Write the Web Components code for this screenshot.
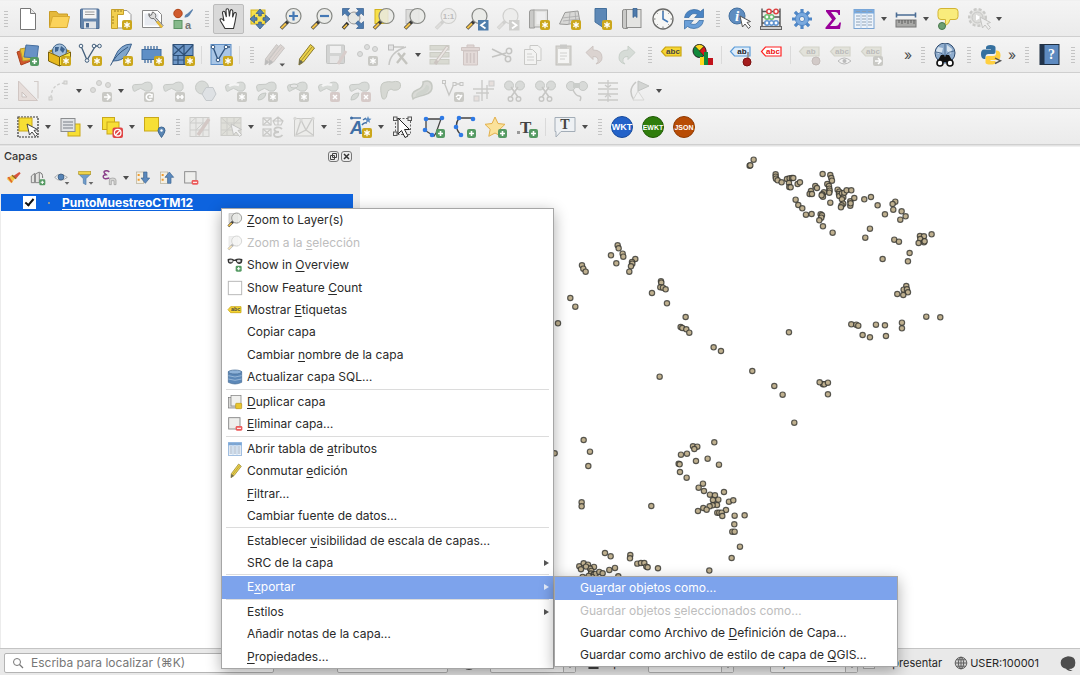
<!DOCTYPE html>
<html lang="es">
<head>
<meta charset="utf-8">
<title>QGIS</title>
<style>
html,body{margin:0;height:100%}
body{font:12px/16px Inter,"Liberation Sans",sans-serif;color:#262626;background:#ececec;overflow:hidden}
</style>
</head>
<body>
<gis-window></gis-window>
<script>
/* ---------- icon fragments ---------- */
const Y='#cba71c', G='#c9c9c5';
const star=(x=13,y=13,c=Y)=>`<g transform="translate(${x} ${y})"><rect width="10" height="10" rx="2" fill="${c}"/><path d="M5 1.800v6.400M2.300 3.400l5.400 3.200M2.300 6.600l5.400-3.200" stroke="#fff" stroke-width="1.300"/></g>`;
const plus=(x=14,y=14,c='#559a63')=>`<g transform="translate(${x} ${y})"><rect width="9" height="9" rx="2" fill="${c}"/><path d="M4.500 2v5M2 4.500h5" stroke="#fff" stroke-width="1.600"/></g>`;
const square=(inner,c=G)=>`<g transform="translate(13 13)"><rect width="10" height="10" rx="2" fill="${c}"/><path d="${inner}" stroke="#fff" stroke-width="1.500" fill="none"/></g>`;
const mag=(inner='',off=false)=>{const o=off;return `<path d="M9 14.500L2 21.500" stroke="${o?'#d0d0ce':'#3a3a3a'}" stroke-width="3.600"/><path d="M7 16.500L2.300 21.200" stroke="${o?'#dedddb':'#f0c14b'}" stroke-width="2.200"/><circle cx="14.500" cy="9" r="7.500" fill="${o?'#ececeb':'#e9eae6'}" fill-opacity=".85" stroke="${o?'#cfcfcd':'#868884'}" stroke-width="1.200"/>${inner}`};
const cursor=(x,y,f='#fff',s='#555')=>`<path transform="translate(${x} ${y})" d="M0 0l2.500 11 2.500-3 3.500 4.500 2-1.800-3.500-4.200 3.500-1z" fill="${f}" stroke="${s}" stroke-width="1"/>`;
const blob=(x=1,y=2)=>`<path transform="translate(${x} ${y})" d="M1 8Q-1 3 5 3.500T13 1.500Q19 0 20 4t-2 6q-5 1-7-1.500T5 9t-4-1z" fill="#d8dbd8" stroke="#c6c9c6"/>`;
const tag=(t,f,s,c,x=1,y=3)=>`<path transform="translate(${x} ${y})" d="M4.500 1h15.500v9H4.500L.5 5.500z" fill="${f}" stroke="${s}" stroke-width="1.200"/><text x="${x+12}" y="${y+8}" text-anchor="middle" font-family="Liberation Sans" font-size="8" font-weight="700" fill="${c}">${t}</text>`;
const pencil=(a,b,tip)=>`<path d="M17.500 1.500l4 3.500-11 14-4.500 3 .5-6z" fill="${a}" stroke="${b}" stroke-width="1"/><path d="M19 4L8 18" stroke="${b}" stroke-width=".8"/><path d="M6.500 16.500l3.800 2.500-4.500 3z" fill="${tip}"/>`;
const node=(x,y,c='#2f7ae5')=>`<circle cx="${x}" cy="${y}" r="2.300" fill="${c}"/>`;
const badge=(t,c,d,fs)=>`<circle cx="12" cy="12" r="10.500" fill="${c}" stroke="${d}" stroke-width="1"/><text x="12" y="15" text-anchor="middle" font-family="Liberation Sans" font-weight="700" font-size="${fs}" fill="#fff">${t}</text>`;
const clip=`<circle cx="6" cy="6.500" r="4.500" fill="#d8dad8" stroke="#c6c9c6"/><circle cx="17" cy="6.500" r="4.500" fill="#d8dad8" stroke="#c6c9c6"/><path d="M8 8l7 10M15 8L8 18" stroke="#c6c6c4" stroke-width="1.500"/><circle cx="7.500" cy="20" r="2.300" fill="none" stroke="#c6c6c4" stroke-width="1.400"/><circle cx="15.500" cy="20" r="2.300" fill="none" stroke="#c6c6c4" stroke-width="1.400"/>`;

const ICONS={
 doc:`<path d="M4.500 1.500h10l5 5v16h-15z" fill="#fff" stroke="#777"/><path d="M14.500 1.500v5h5" fill="#e8e8e8" stroke="#777"/>`,
 open:`<path d="M2.500 20.500v-16h7l2 2.500h9v3" fill="#e5b93c" stroke="#c99c25"/><path d="M2.500 20.500l3-11h17l-2.500 11z" fill="#fbd35b" stroke="#d8aa31"/>`,
 save:`<path d="M3.500 2h16.500q1 0 1 1v18.500H3.500q-1 0-1-1V3q0-1 1-1z" fill="#6485ac" stroke="#4b6b93"/><rect x="5" y="2.500" width="13.500" height="9" fill="#f4f4f4"/><path d="M7 5h9.500M7 7.500h9.500" stroke="#999"/><rect x="6" y="14.500" width="12" height="7" fill="#dfe3e8"/><rect x="8" y="16" width="3" height="4.500" fill="#4b6b93"/>`,
 layout:`<path d="M5 3.500h13l4 4V21H5z" fill="#fff" stroke="#999"/><path d="M2.500 2.500h12v5h-6v14h-6z" fill="#f2cf50" stroke="#c5a02b"/><path d="M6 3v2M9 3v2M12 3v2M3 10h2M3 13h2M3 16h2" stroke="#8a6d15" stroke-width=".8"/>${star(13,13)}`,
 layouts:`<path d="M2.500 3.500h15l4 4v13h-19z" fill="#fff" stroke="#888"/><path d="M4.500 6.500h14v12h-14z" fill="#e7eaf0"/><path d="M9 6.500a4 4 0 0 0 5 5l7 9 2-2-7.500-8a4 4 0 0 0-3-5.500l-1 3-2 .5z" fill="#ddd" stroke="#666" stroke-width=".9"/><path d="M17 14.500l5 6" stroke="#e8bb35" stroke-width="2.400"/>`,
 style:`<circle cx="7" cy="6.500" r="4.200" fill="#d05a2d" stroke="#b14519"/><path d="M21.500 2l-5 4.500q-3 1-3 4 3 .5 5-2L22 3z" fill="#5c83ae"/><rect x="3" y="13.500" width="8" height="8" fill="#86b98b" stroke="#5c9463"/><text x="14" y="22" font-family="Liberation Sans" font-size="11" font-weight="700" fill="#777">a</text>`,
 pan:`<path d="M8 21.500L3.500 14q-1-2 .5-2.200T7 14L5.500 6q0-1.700 1.200-1.700T8.200 6l1.200 4L9 3.500Q9 1.800 10.300 1.800T11.800 3.500l.6 6 .8-5.500q.3-1.500 1.500-1.300T15.800 4.500l-.2 5.700 1.300-3.700q.6-1.300 1.600-1t.8 1.800L18 15l-1.500 6.500z" fill="#fff" stroke="#333" stroke-width="1.100"/>`,
 panSel:`<rect x="3" y="3" width="14" height="14" fill="#f7e04a" stroke="#d2b21c"/><path d="M12 2l4 4.500h-2.700V9h-2.600V6.500H8zM12 22l4-4.500h-2.700V15h-2.600v2.500H8zM2 12l4.500-4v2.700H9v2.600H6.500V16zM22 12l-4.500-4v2.700H15v2.600h2.500V16z" fill="#5580b0" stroke="#3a5f8c" stroke-width=".8"/>`,
 zin:mag(`<path d="M14.500 4.500v9M10 9h9" stroke="#4579b5" stroke-width="2.200"/>`),
 zout:mag(`<path d="M10 9h9" stroke="#4579b5" stroke-width="2.200"/>`),
 zfull:`<path d="M7 16L2 21.500" stroke="#333" stroke-width="3.400"/><path d="M6 17.500l-3.500 3.700" stroke="#f0c14b" stroke-width="1.800"/><circle cx="13" cy="11" r="6" fill="#e6e7e3" stroke="#999"/><path d="M1.500 1.500h7L6.300 3.800l3 3-2.500 2.500-3-3L1.500 8.500zM22.500 1.500h-7l2.200 2.300-3 3 2.500 2.500 3-3 2.300 2.200zM22.500 21.500h-7l2.200-2.300-3-3 2.500-2.500 3 3 2.300-2.200z" fill="#4c7bb0" stroke="#355d8c" stroke-width=".7"/>`,
 zsel:`<rect x="3" y="2.500" width="13" height="14" fill="#f7e04a" stroke="#d2b21c"/>${mag()}`,
 zlayer:`<rect x="3" y="2.500" width="13" height="14" fill="#dcdcda" stroke="#bbb"/>${mag()}`,
 z11:mag(`<text x="14.500" y="12" text-anchor="middle" font-family="Liberation Sans" font-size="8" font-weight="700" fill="#bbb">1:1</text>`,1),
 zlast:mag('')+`<rect x="13" y="13" width="10.500" height="10.500" fill="#4e7dab"/><path d="M20.500 15l-4.500 3.200 4.500 3.200" stroke="#fff" stroke-width="1.800" fill="none"/>`,
 znext:mag('',1)+`<rect x="13" y="13" width="10.500" height="10.500" fill="#cfcfcd"/><path d="M16 15l4.500 3.200-4.500 3.200" stroke="#fff" stroke-width="1.800" fill="none"/>`,
 newmap:`<path d="M2.500 5q0-2 2-2h3v18H2.500z" fill="#c9c9c7" stroke="#9a9a98"/><rect x="7" y="3" width="13.500" height="17" fill="#e2e2e0" stroke="#a5a5a3"/><rect x="9.500" y="5" width="9" height="12" fill="#eee"/>${star()}`,
 new3d:`<path d="M7 5.500l13-1.500 2 11-13 2.500-7.500-.5z" fill="#d8d8d6" stroke="#9a9a98"/><path d="M4 11l17-2M12 5l-1 12M17 4l1 11M5 14l16-2" stroke="#aaa" stroke-width=".8"/>${star()}`,
 bmnew:`<path d="M6 1.500h11.500v17L15 21l-9-6z" fill="#5d88b6" stroke="#44709c"/>${star(13,13)}`,
 bm:`<path d="M2.500 4q0-1.500 2-1.500h3v19h-3q-2 0-2-1.500z" fill="#c9c9c7" stroke="#8a8a88"/><rect x="6.500" y="2.500" width="14.500" height="18" fill="#e4e4e2" stroke="#8f8f8d"/><path d="M13 1.500h4v9l-2-1.800-2 1.800z" fill="#4e7bac" stroke="#34608f" stroke-width=".8"/>`,
 clock:`<circle cx="12" cy="12" r="10" fill="#f7f7f5" stroke="#6a6a68" stroke-width="1.300"/><path d="M12 4v8l5 3" stroke="#4579b5" stroke-width="1.600" fill="none"/><path d="M12 3v1.500M12 19.500V21M3 12h1.500M19.500 12H21M5.600 5.600l1 1M17.400 17.400l1 1M5.600 18.400l1-1M17.400 6.600l1-1" stroke="#777"/>`,
 refresh:`<path d="M2.500 10.500Q4 3 12 2.500q4 0 6.500 2L21.500 2v8.500h-8.800l3-3Q10 4.500 7 10.500z" fill="#4a84c4" stroke="#2f659f" stroke-width=".7"/><path d="M21.500 13.500Q20 21 12 21.500q-4 0-6.500-2L2.500 22v-8.500h8.800l-3 3q5.700 3 8.700-3z" fill="#6a9fd8" stroke="#2f659f" stroke-width=".7"/>`,
 info:`<circle cx="9" cy="9" r="8" fill="#5f8dc0" stroke="#44709f"/><text x="9" y="14" text-anchor="middle" font-family="Liberation Serif" font-size="15" font-style="italic" font-weight="700" fill="#fff">i</text>${cursor(12,9,'#fff','#555')}`,
 abacus:`<path d="M3 1.500v19M21 1.500v19M3 4.500h18M3 10h18M3 16h18" stroke="#555" fill="none" stroke-width="1.400"/><rect x="1.500" y="19.500" width="21" height="3" fill="#cfcfcd" stroke="#666"/><g fill="#fff" stroke-width="1.500"><g stroke="#d44"><circle cx="10" cy="4.500" r="2.200"/><circle cx="17" cy="4.500" r="2.200"/></g><g stroke="#6cbf74"><circle cx="8" cy="10" r="2.200"/><circle cx="12.500" cy="10" r="2.200"/></g><g stroke="#5f94cf"><circle cx="8" cy="16" r="2.200"/><circle cx="12.500" cy="16" r="2.200"/><circle cx="17" cy="16" r="2.200"/></g></g>`,
 gear:`<g stroke="#4f86c6" stroke-width="3.200"><path d="M12 2v20M2 12h20M4.900 4.900l14.200 14.200M4.900 19.100L19.100 4.900"/></g><circle cx="12" cy="12" r="6.500" fill="#7aa9de" stroke="#4f86c6"/><circle cx="12" cy="12" r="2.600" fill="#eee" stroke="#4f86c6"/>`,
 sigma:`<path d="M5 3h14v5h-1.500Q17 5 14 5h-4l5 6.500L9 19h5.500q3 0 4-3.500H20L19 22H4.500v-1.500l6.500-8L5 4.500z" fill="#990099"/>`,
 table:`<rect x="2" y="2.500" width="20" height="19" fill="#eef4fb" stroke="#79a3d2"/><rect x="2" y="2.500" width="20" height="4" fill="#79a9dd"/><path d="M4 9h4M4 12h4M4 15h4M4 18h4M10 9h4M10 12h4M10 15h4M10 18h4M16 9h4M16 12h4M16 15h4M16 18h4M4 4.500h4M10 4.500h4M16 4.500h4" stroke="#8b9fb5" stroke-width="1.200"/><path d="M9 6v15.500M15 6v15.500" stroke="#a7c4e5" stroke-width=".8"/>`,
 measure:`<path d="M2.500 8h19M2.500 5.500v5M21.500 5.500v5" stroke="#4a6c94" stroke-width="1.600"/><rect x="2" y="13" width="20" height="7" fill="#a9a9a7" stroke="#777"/><path d="M5 13v3M8 13v4M11 13v3M14 13v4M17 13v3M20 13v4" stroke="#555" stroke-width=".9"/>`,
 balloon:`<path d="M5 1.500h14q3 0 3 3v5q0 3-3 3h-5q0 4-6 7 2-3 1.500-7H5q-3 0-3-3v-5q0-3 3-3z" fill="#f9ec7c" stroke="#d2b433"/><circle cx="6" cy="19" r="3.500" fill="#6e9f72" stroke="#47794d"/>`,
 gearoff:`<circle cx="10.500" cy="10.500" r="8.300" fill="#e4e4e2" stroke="#c9c9c7" stroke-width="2.400" stroke-dasharray="3 2"/><circle cx="10.500" cy="10.500" r="5.500" fill="#dcdcda" stroke="#c6c6c4"/><path d="M9 7.500l5 3-5 3z" fill="#fff"/>${cursor(13,10,'#eee','#c4c4c2')}`,
 datasrc:`<path d="M1 9l11-4 3 13-10 4z" fill="#d0562c" stroke="#a9401c"/><path d="M4 6l11-2 3 12-11 2z" fill="#e9c23a" stroke="#b8962a"/><path d="M10 2l12.500 1-1.500 12-13-1z" fill="#6892c6" stroke="#466f9f"/>${plus()}`,
 geopkg:`<path d="M1.500 8l11-5 11 5-11 5z" fill="#b8900f"/><circle cx="12.500" cy="8" r="7" fill="#a3bfdb" stroke="#45688e"/><path d="M8 4l4 0-1 4-3 1zM14 3l4 3-2 4-3-3z" fill="#3d6390"/><path d="M1.500 9l11 5v9l-11-5z" fill="#e6b81d" stroke="#7c610a"/><path d="M12.500 14l11-5v9l-11 5z" fill="#f7e33c" stroke="#7c610a"/>${star(14,13)}`,
 newshp:`<path d="M3 3l6 14L17.500 3h4" fill="none" stroke="#45607c" stroke-width="1.300"/><g fill="#eef3f8" stroke="#45607c"><circle cx="3" cy="3" r="1.800"/><circle cx="9" cy="17.500" r="1.800"/><circle cx="16" cy="3" r="1.800"/><circle cx="21.500" cy="3" r="1.800"/></g>${star(14,13)}`,
 feather:`<path d="M22.500 1Q11 1 6 13.500L4 18q9 0 13-5.500T22.500 1z" fill="#7fa5cd" stroke="#3d638f"/><path d="M1.500 22.500Q6 12 19 4" stroke="#33567f" fill="none"/>${star(14,13)}`,
 memory:`<rect x="2" y="6.500" width="19" height="10" fill="#5f8fc6" stroke="#3f6c9f"/><path d="M5 3v3.500M8 3v3.500M11 3v3.500M14 3v3.500M17 3v3.500M5 16.500V20M8 16.500V20M11 16.500V20" stroke="#3f6c9f" stroke-width="1.300"/>${star(14,13)}`,
 mesh:`<rect x="2" y="1.500" width="20" height="20" fill="#6f98c8" stroke="#2e5078"/><path d="M13 1.500v20M2 12.500h20M2 2l11 10M13 2L2 12M22 2l-9 10M7 13v8M2 17h11" stroke="#2e5078" stroke-width="1.200"/>${star(14,13)}`,
 virtual:`<rect x="2" y="1.500" width="20" height="20" fill="#a9c6e6" stroke="#5f8fc6"/><path d="M4 4l5 13L17 4h4" fill="none" stroke="#33567f" stroke-width="1.400"/><g fill="#fff" stroke="#33567f"><circle cx="4" cy="4" r="1.800"/><circle cx="9" cy="17" r="1.800"/><circle cx="17" cy="4" r="1.800"/></g>${star(14,13)}`,
 pencils:`<g transform="translate(-3 0)">${pencil('#d8d3d0','#c8c5c3','#bbb')}</g><g transform="translate(1 0)">${pencil('#ddd5d2','#c8c5c3','#bbb')}</g><path d="M17.500 20.500h5.500l-2.800 3z" fill="#555"/>`,
 pencil:pencil('#ecd24b','#8c7a2a','#6b6b55'),
 saveoff:`<rect x="2.500" y="2" width="18" height="18.500" rx="1" fill="#d3d4d3" stroke="#c3c4c3"/><rect x="6" y="3" width="11" height="7" fill="#f0f0f0"/><rect x="6" y="13" width="9" height="7" fill="#e6e6e6"/><path d="M22 8l-8 13" stroke="#d8cdcb" stroke-width="3"/>`,
 addpts:`<g fill="#dcdddc" stroke="#c6c7c6"><circle cx="5" cy="11" r="2.500"/><circle cx="12" cy="4" r="2.500"/><circle cx="20" cy="6" r="2.500"/></g>${star(13,13,G)}`,
 vertex:`<path d="M3 22Q4 9 20 4M5 4h13" fill="none" stroke="#c6c6c4" stroke-width="1.500"/><rect x="2.500" y="2" width="5" height="5" fill="#e5e5e5" stroke="#bbb"/><path d="M12 10l9 11M19 10l-8 10" stroke="#c4c4bf" stroke-width="2.400"/>`,
 multiedit:`<g fill="#d9dad2" stroke="#cbccc4"><rect x="2" y="2.500" width="19" height="4.500"/><rect x="2" y="9.500" width="19" height="4.500"/><rect x="2" y="16.500" width="19" height="4.500"/></g><path d="M20 3L9 18l-2 3" stroke="#cbc4c0" stroke-width="3.400"/><path d="M19.500 4L9.500 17.500" stroke="#ebe7e4" stroke-width="1.600"/>`,
 trash:`<path d="M8 4V2h7v2M2.500 4.500h18v3h-18z" fill="#e0d6d4" stroke="#cfc5c3"/><path d="M4.500 8h14v14h-14z" fill="#e3dad8" stroke="#cfc5c3"/><path d="M8 10v10M11.500 10v10M15 10v10" stroke="#cfc5c3" stroke-width="1.500"/>`,
 cut:`<path d="M2 6l14 7M2 14l14-4" stroke="#c4c4c2" stroke-width="1.700"/><circle cx="19" cy="8" r="2.700" fill="none" stroke="#c4c4c2" stroke-width="1.500"/><circle cx="18" cy="16" r="2.700" fill="none" stroke="#c4c4c2" stroke-width="1.500"/>`,
 copy:`<g fill="#f3f3f2" stroke="#c9c9c7"><path d="M9 2.500h8l3 3v12H9z"/><path d="M3.500 6.500h8l4 4v11h-12z"/></g><path d="M6 11h5M6 14h7M6 17h7" stroke="#d0d0ce"/>`,
 paste:`<rect x="4" y="3" width="15" height="19" fill="#d6d5d1" stroke="#c3c2be"/><rect x="6" y="6" width="11" height="14" fill="#f5f5f4"/><rect x="8" y="1.500" width="7" height="4" fill="#cacac8"/><path d="M8 10h7M8 13h7M8 16h5" stroke="#d0d0ce"/>`,
 undo:`<path d="M3 9.500l7-6.500v4q9 0 9 7.500 0 5-6 6.500 3-2 2-5t-5-2.500v3z" fill="#dbd3d0" stroke="#cdc5c2"/>`,
 redo:`<path d="M21 9.500L14 3v4q-9 0-9 7.500 0 5 6 6.500-3-2-2-5t5-2.500v3z" fill="#d6dcd7" stroke="#c8cfc9"/>`,
 lab:tag('abc','#f6d633','#c9a410','#444'),
 labsmall:tag('abc','#f6d633','#c9a410','#444',1,6),
 diagram:`<circle cx="8.500" cy="8" r="6.500" fill="#11893c" stroke="#222"/><path d="M8.500 8L4 3.300Q6 1.500 8.500 1.500t4.500 2z" fill="#ffd91e" stroke="#222" stroke-width=".6"/><path d="M8.500 8L13 3.500Q17 8 13 13z" fill="#d9181e" stroke="#222" stroke-width=".6"/><rect x="9" y="14" width="4" height="8" fill="#ffd91e"/><rect x="13" y="9" width="4" height="13" fill="#11893c"/><rect x="17" y="15" width="5" height="7" fill="#c1121a"/>`,
 labpin:tag('ab','#dcecfb','#5b9bd8','#222')+`<path d="M19 9v9" stroke="#999" stroke-width="2"/><circle cx="18" cy="19" r="4" fill="#a51d1d" stroke="#7d1010"/>`,
 labred:tag('abc','#fff','#f22','#e11'),
 labpoff:tag('ab','#e2e2da','#d3d3ca','#bbb')+`<circle cx="18" cy="18" r="4" fill="#d2cac8" stroke="#c4bcba"/>`,
 labeye:tag('abc','#e2e2da','#d3d3ca','#bbb')+`<path d="M9 18q6-6 13 0-7 6-13 0z" fill="#f2f2f2" stroke="#bbb"/><circle cx="15.500" cy="18" r="2" fill="#bbb"/>`,
 labmove:tag('abc','#e2e2da','#d3d3ca','#bbb')+square('M2 5h5M5 2l3 3-3 3'),
 globeb:`<circle cx="12" cy="10" r="10" fill="#8eaccd" stroke="#2f4b6e"/><path d="M5 4l5 1-1 4-4 2-2-3zM14 2l5 4-1 5-4-3z" fill="#d5e2ee"/><path d="M3 9q5 0 9 4M12 1v12M21 8q-5 0-9 5" stroke="#4d6c91" fill="none"/><path d="M8 12h3l1 2 1-2h3l4 7H4z" fill="#111"/><circle cx="7" cy="20" r="3" fill="#fff" stroke="#111" stroke-width="1.600"/><circle cx="17" cy="20" r="3" fill="#fff" stroke="#111" stroke-width="1.600"/>`,
 python:`<path d="M11.500 2q5 0 5 2.500V9q0 2-2 2h-5q-3 0-3 3v2H5q-3-.5-3-5t3-4.500h7V6H7V4.500Q7 2 11.500 2z" fill="#35709f"/><path d="M18 7.500q3.500.5 3.500 5t-4 4.500h-6v1h5v1.500q0 2-5 2t-5-2V15q0-2 2-2h5.500q3 0 3-2.500V7.500z" fill="#ffd040"/><path d="M16 15l5.500 2.800L16 20.500" fill="none" stroke="#555" stroke-width="1.400"/>`,
 help:`<rect x="3" y="1.500" width="19" height="20" fill="#5d8ac0" stroke="#1f2e40"/><rect x="3" y="1.500" width="4.500" height="20" fill="#22344b"/><text x="14.500" y="16" text-anchor="middle" font-family="Liberation Serif" font-size="14" font-weight="700" fill="#fff">?</text>`,
 setsq:`<path d="M2.500 2l19 19.500h-19z" fill="#e6ddda" stroke="#d0c6c3"/><path d="M6 13l5 5H6z" fill="#f0f0f0" stroke="#cbc1be"/><path d="M18 2.500h4v17" fill="none" stroke="#d2ccc9" stroke-width="1.200"/>`,
 curve:`<path d="M4 19Q4 5 18 4" fill="none" stroke="#cfcfcd" stroke-width="1.300" stroke-dasharray="3 2"/><g fill="#e6e6e4" stroke="#c9c9c7"><rect x="2" y="18" width="3" height="3"/><rect x="17" y="2" width="3" height="3"/></g>`,
 movef:`<g fill="#dcdcda" stroke="#c9c9c7"><circle cx="4" cy="11" r="2.500"/><circle cx="10" cy="4" r="2.500"/><circle cx="19" cy="6" r="2.500"/></g>${square('M2 5h5M5 2l3 3-3 3')}`,
 rotate:blob()+square('M7.500 3a3 3 0 1 0 0 4M5 5h3v-3'),
 scale:blob()+square('M2 5h6M3.500 3L2 5l1.500 2M6.500 3L8 5 6.500 7'),
 simplify:`<circle cx="9" cy="8.500" r="6.500" fill="#d8dbd8" stroke="#c6c9c6"/><path d="M9 15l4-6.500h7l3 6.500-4 6.500h-6z" fill="#dee1e4" stroke="#c4c8cb"/>`,
 ring:blob()+`<path d="M5 7q4-3 10-1" stroke="#f4f4f4" stroke-width="2.500" fill="none"/>`+star(13,13,G),
 part:blob()+`<path d="M3 21q0-7 8-7-1 7-8 7z" fill="#d6d9d6" stroke="#c3c7c3"/>`+star(13,13,G),
 fillring:blob()+`<ellipse cx="8" cy="7" rx="4" ry="2" fill="#e6e6e6" stroke="#c3c7c3"/>`+star(13,13,G),
 delring:blob()+`<path d="M5 7q4-3 10-1" stroke="#f4f4f4" stroke-width="2.500" fill="none"/>`+square('M3 3l4 4M7 3L3 7','#d6cac8'),
 delpart:blob()+`<path d="M3 21q0-7 8-7-1 7-8 7z" fill="#d6d9d6" stroke="#c3c7c3"/>`+square('M3 3l4 4M7 3L3 7','#d6cac8'),
 reshape:`<path d="M2.500 17Q0 5 5 3.500T13 3q8-2 8.500 2.500T18 11t-6-1q-4 1-4 5 0 4-2.500 5t-3-3z" fill="#d6d8d3" stroke="#c5c8c2"/>`,
 offset:`<path d="M3 20q-3-6 4-9T13 3q8-3 9 4t-8 9-11 4z" fill="#d9dad6" stroke="#c5c8c2" stroke-width="1.500"/><path d="M6 18q-1-4 4-6t6-6q4 0 3 4t-8 6z" fill="#d0d4ce"/>`,
 vdel:`<path d="M3 3l5 13L13 5h8" fill="none" stroke="#c6c6c4" stroke-width="1.300"/><g fill="#eee" stroke="#c6c6c4"><rect x="1.500" y="1.500" width="3" height="3"/><rect x="12" y="3.500" width="3" height="3"/><rect x="19" y="3.500" width="3" height="3"/></g>${square('M3 6l2 1.500L8 3M2 5l2-2 3 1')}`,
 merge:`<path d="M1 10h21M10 1v21M15 6v14M4 14h13" stroke="#cbcbc9" stroke-width="1.400"/><rect x="17" y="2" width="5" height="5" fill="#e6dfdc" stroke="#ccc"/><rect x="2" y="17" width="5" height="5" fill="#e6dfdc" stroke="#ccc"/>`,
 split1:clip,split2:clip,
 join:`<circle cx="6" cy="7" r="4.500" fill="#d8dad8" stroke="#c6c9c6"/><circle cx="18" cy="7" r="4.500" fill="#d8dad8" stroke="#c6c9c6"/><rect x="8" y="4" width="7" height="5" fill="#cacdca"/><path d="M8 11q3 6 6 6t1 5" stroke="#c6c6c4" fill="none" stroke-width="1.500"/>`,
 align:`<path d="M2 4h20M2 10h20M2 15h20M2 21h20" stroke="#cacac8" stroke-width="1.300"/><path d="M12 1v7M12 11v4M12 17v6M9 6l3 2.500L15 6M9 18l3-2.500 3 2.500" stroke="#cacac8" fill="none" stroke-width="1.300"/>`,
 mirror:`<path d="M7 21Q0 11 9 3" fill="none" stroke="#c6c6c4" stroke-width="1.500"/><path d="M11 2l11 5-11 5z" fill="#d3d5d3" stroke="#c3c5c3"/><path d="M11 12l6 9H6z" fill="#f1f1f1" stroke="#d6d6d4"/>`,
 select:`<rect x="2" y="2" width="20" height="20" fill="none" stroke="#333" stroke-width="1.200" stroke-dasharray="2 1"/><rect x="3" y="3" width="13" height="13" fill="#f7df35" stroke="#c9a81b"/>${cursor(11,9,'#fff','#444')}`,
 selform:`<rect x="10" y="9" width="12" height="12" fill="#f7df35" stroke="#c9a81b"/><rect x="3" y="3.500" width="14" height="13" fill="#e0e3e6" stroke="#8b8d8f"/><path d="M5 7h10M5 10h10M5 13h10" stroke="#9aa1a8" stroke-width="1.400"/>`,
 deselect:`<rect x="2.500" y="2.500" width="12" height="12" fill="#f7df35" stroke="#c9a81b"/><rect x="7" y="7" width="12" height="12" fill="#f7df35" stroke="#c9a81b"/><rect x="12.500" y="12.500" width="10.500" height="10.500" rx="2" fill="#e04545"/><circle cx="17.700" cy="17.700" r="3.300" fill="none" stroke="#fff" stroke-width="1.300"/><path d="M15.500 20l4.500-4.500" stroke="#fff" stroke-width="1.300"/>`,
 selloc:`<rect x="2.500" y="2.500" width="14" height="13.500" fill="#f7df35" stroke="#c9a81b"/><path d="M19.500 22.500q-3.500-5-3.500-7a3.500 3.500 0 0 1 7 0q0 2-3.500 7z" fill="#5b87b5" stroke="#3f6791"/><circle cx="19.500" cy="15.500" r="1.200" fill="#fff"/>`,
 fieldcalc:`<g fill="#e8e8e6" stroke="#cdcdcb"><rect x="2" y="2.500" width="19" height="19"/><path d="M2 8h19M2 15h19M8 2.500v19M15 2.500v19M2 8l6-5.500M8 15l7-7"/></g><path d="M21 4L10 20" stroke="#d3c8c5" stroke-width="3.400"/>`,
 fieldsel:`<g fill="#dfdfd9" stroke="#cdcdc9"><rect x="2" y="2.500" width="20" height="18"/><path d="M2 8h20M2 15h20M8 2.500v18M15 2.500v18M2 2.500l20 18M22 2.500l-20 18"/></g>${cursor(12,9,'#f1f1f1','#c4c4c2')}`,
 expr:`<g fill="none" stroke="#c9c9c7" stroke-width="1.200"><rect x="2" y="3" width="8" height="7"/><path d="M2 3l8 7M10 3l-8 7"/><path d="M17 2l5 4-2 4h-6l-2-4zM17 2v8M12 6h10"/><rect x="2" y="14" width="8" height="7"/><path d="M2 14l8 7M10 14l-8 7"/><path d="M21 14q-2-2-5-1.500t-2.500 2.500 4.500 2q-5 0-5 2.500t4 2.500q3 0 4.500-2" stroke-width="1.800"/></g>`,
 topo:`<rect x="2.500" y="3.500" width="19" height="17.500" fill="#ececea" stroke="#cacac8"/><path d="M4 20l5-15 5 10 6-11M4 20l10-5 7 5" stroke="#cacac8" fill="none" stroke-width="1.300"/><g fill="#d9d9d7"><circle cx="3" cy="3.500" r="1.700"/><circle cx="21" cy="3.500" r="1.700"/><circle cx="9" cy="5" r="1.700"/></g>`,
 annot:`<text x="1" y="19" font-family="Liberation Sans" font-size="18" font-weight="700" font-style="italic" fill="#3f6ea5">A</text><path d="M2 3h10M13 10q2-3 5-2M14 5l3-2" stroke="#3f6ea5" stroke-width="1.500" fill="none"/><circle cx="2.500" cy="3" r="1.500" fill="#3f6ea5"/><path d="M19 1l1 2.500 2.500.3-2 1.700.7 2.500-2.200-1.400L16.800 8l.7-2.500-2-1.700 2.500-.3z" fill="#5c8cc2"/>${star(13,13)}`,
 annsel:`<rect x="4.500" y="3.500" width="15" height="16" fill="none" stroke="#666" stroke-dasharray="2 1.500"/><g fill="#eee" stroke="#555"><rect x="2.500" y="2" width="3.500" height="3.500"/><rect x="17" y="2" width="3.500" height="3.500"/><rect x="2.500" y="17" width="3.500" height="3.500"/></g><path d="M7 3v16l3.500-3.500 3.500 7 3-1.500-3.500-6.500h5z" fill="#fff" stroke="#222"/>`,
 annpoly:`<path d="M4 4h15l-5 14-2 3-8-5z" fill="#e6e9ec" stroke="#444" stroke-width="1.300"/>${node(4,4)}${node(20,3)}${node(3,15)}${node(10,20)}${plus()}`,
 annline:`<path d="M6 3h14M6 3Q0 12 8 20" fill="none" stroke="#444" stroke-width="1.400"/>${node(6,3)}${node(20,4)}${node(3,12)}${node(8,20)}${plus()}`,
 annstar:`<path d="M11 2l3 6.500 7 .8-5.200 5 1.400 7L11 18l-6.200 3.300 1.400-7L1 9.300l7-.8z" fill="#fbe29a" stroke="#e2b04c"/>${plus()}`,
 anntext:`<text x="5" y="18" font-family="Liberation Serif" font-size="17" font-weight="700" fill="#444">T</text><rect x="2" y="16" width="3" height="3" fill="#999"/>${plus()}`,
 annbox:`<path d="M2 2.500h20v14H8l-5 5.500v-5.500H2z" fill="#eef1f4" stroke="#a3adb7"/><text x="12" y="14" text-anchor="middle" font-family="Liberation Serif" font-size="14" font-weight="700" fill="#444">T</text>`,
 wkt:badge('WKT','#2463c9','#174a9c',9),ewkt:badge('EWKT','#2f7d0c','#1f5a05',7),json:badge('JSON','#b84c05','#8f3a02',7),
 /* layer panel and menu icons */
 brush:`<path d="M1 13l9-6 5 4-7 9z" fill="#f2c64a"/><path d="M2 11l6 8 2-1-5-8z" fill="#e0662c"/><path d="M11 9l9-6 2 2-7 8z" fill="#d7553f"/><path d="M9 8l6 5" stroke="#8a6a20" stroke-width="2"/>`,
 addgroup:`<path d="M2 19V9l5-4v14zM8 19V6l6-3v16z" fill="#e2e2e0" stroke="#777" stroke-width="1.300"/><path d="M15 4q4 0 4 8" fill="none" stroke="#777" stroke-width="1.500"/>${plus()}`,
 eye:`<path d="M1 11Q9 2 20 11 9 20 1 11z" fill="#eef2f5" stroke="#888"/><circle cx="10.500" cy="10.500" r="4.500" fill="#5683b5" stroke="#2e4f73"/><path d="M16 18h7l-3.500 4z" fill="#666"/>`,
 filter:`<path d="M1 6h18l-7 7v9l-4-2v-7z" fill="#6f9cca" stroke="#4e7aa8"/><rect x="1" y="2" width="18" height="4.500" fill="#edd24a" stroke="#b89c2a"/><path d="M16 18h7l-3.500 4z" fill="#666"/>`,
 eps:`<path d="M11 3Q8 0 4.500 1.500T6 7Q1 7.500 2 11t9 1" fill="none" stroke="#8a3f8a" stroke-width="2.200"/><path d="M11 22v-7q0-3 5-3t5 3v7h-3v-6h-4v6z" fill="#d5d5d3" stroke="#999"/>`,
 expand:`<rect x="2" y="3" width="11" height="17" fill="#f3efe3" stroke="#b5ad95"/><path d="M4 6h3v3H4zM4 13h3v3H4z" fill="#f09a2c"/><path d="M13 3h5v9h4l-6.500 8L9 12h4z" fill="#5b89bd" stroke="#3a6393"/>`,
 collapse:`<rect x="2" y="3" width="11" height="17" fill="#f3efe3" stroke="#b5ad95"/><path d="M4 6h3v3H4zM4 13h3v3H4z" fill="#f09a2c"/><path d="M13 20h5v-9h4l-6.500-8L9 11h4z" fill="#5b89bd" stroke="#3a6393"/>`,
 remove:`<rect x="2.500" y="2.500" width="17" height="17" fill="#eeeeec" stroke="#888" stroke-width="1.400"/><rect x="13" y="15" width="10" height="7" rx="2" fill="#ec5b5b"/><path d="M15 18.500h6" stroke="#fff" stroke-width="1.600"/>`,
 glasses:`<path d="M1 3q5-2 10 1 6-3 12-1v3l-1 3q-4 3-7 0l-2-3h-3l-2 3q-3 2-6 0L1 6z" fill="#333"/><rect x="3" y="4" width="5.500" height="4" rx="2" fill="#ddd"/><rect x="15" y="4" width="5.500" height="4" rx="2" fill="#ddd"/>${plus(13,13)}`,
 db:`<path d="M2 4v16q10 5 20 0V4z" fill="#5c88b8" stroke="#3f6791"/><ellipse cx="12" cy="4.500" rx="10" ry="3" fill="#8fb3d9" stroke="#3f6791"/><path d="M2 10q10 4 20 0M2 15q10 4 20 0" stroke="#9fbddb" fill="none" stroke-width="1.300"/>`,
 dup:`<rect x="2" y="5" width="15" height="16" fill="#d9d9d7" stroke="#777"/><rect x="6" y="2" width="15" height="16" fill="#f0f0ee" stroke="#777"/><rect x="13" y="14" width="9" height="8" rx="1" fill="#e9c62f" stroke="#b6951a"/>`,
 box:`<rect x="2" y="2" width="20" height="20" fill="#fff" stroke="#b9b9b9" stroke-width="1.500"/>`,
 search:`<circle cx="10" cy="10" r="7" fill="none" stroke="#777" stroke-width="2"/><path d="M15 15l7 7" stroke="#777" stroke-width="2.400"/>`,
 globe:`<g fill="none" stroke="#555" stroke-width="1.500"><circle cx="12" cy="12" r="10" fill="#d2d2d2"/><ellipse cx="12" cy="12" rx="4.500" ry="10"/><path d="M2 12h20M4 6.500h16M4 17.500h16M12 2v20"/></g>`,
 lock:`<rect x="1" y="9" width="22" height="15" fill="#444"/>`,
 wheel:`<circle cx="12" cy="12" r="10" fill="#eee" stroke="#555" stroke-width="4"/>`,
 chat:`<path d="M12 2q11 0 11 9.500T13 21l6 3q-8 0-10-3.500Q1 19 1 11.500T12 2z" fill="#4d4d4d"/>`
};
const icon=(n,s=24)=>`<svg viewBox="0 0 24 24" width="${s}" height="${s}" aria-hidden="true">${ICONS[n]}</svg>`;

/* ---------- base class ---------- */
class Base extends HTMLElement{
  connectedCallback(){
    if(this.shadowRoot)return;
    const t=document.createElement('template');
    t.innerHTML=`<style>*{box-sizing:border-box}svg{display:block;flex:none}${this.css()}</style>${this.html()}`;
    this.attachShadow({mode:'open'}).append(t.content.cloneNode(true));
  }
  at(n){return this.getAttribute(n)}
}
const define=(name,css,html)=>customElements.define(name,class extends Base{css(){return css}html(){return typeof html==='function'?html(this):html}});

define('tool-button',`
 :host{display:flex;flex:none}
 button{all:unset;box-sizing:border-box;display:flex;align-items:center;justify-content:center;width:31px;height:30px;border-radius:2px}
 .menu{width:11px;padding-right:2px}
 .menu::before{content:"";border:3px solid transparent;border-top:4px solid #4d4d4d;border-bottom:0}
 :host([checked]) button{background:#d9d9d9;border:1px solid #bcbcbc}
 :host([small]) button{width:24px;height:24px}
 :host([small]) .menu{width:9px}`,
 e=>`<button type="button" aria-label="${e.at('label')||e.at('icon')}">${icon(e.at('icon'),e.hasAttribute('small')?16:24)}</button>${e.hasAttribute('menu')?'<button type="button" class="menu" aria-label="Más opciones"></button>':''}`);

define('tool-bar',`
 :host{display:flex;align-items:center;flex:none}
 i{width:4px;height:18px;margin:0 4px;background:radial-gradient(circle,#c4c4c4 1px,transparent 1px) 0 0/2px 3px}`,
 `<i></i><slot></slot>`);

define('tool-row',`
 :host{display:flex;align-items:center;gap:3px;height:36px;border-bottom:1px solid #cfcfcf;box-shadow:0 1px #e2e2e2;background:linear-gradient(#f4f4f4,#ebebeb);overflow:hidden}`,
 `<slot></slot>`);

define('tool-sep',`:host{width:1px;height:18px;margin:0 3px;background:#dadada}`,``);

define('tool-more',`
 :host{display:flex;flex:none}:host([spaced]){margin-left:15px}
 button{all:unset;width:12px;text-align:center;font-size:14px;line-height:18px;color:#4a4a4a}`,
 `<button type="button" aria-label="Más herramientas"><span>»</span></button>`);

const row=(...groups)=>`<tool-row>${groups.map(g=>`<tool-bar>${g.split(' ').filter(Boolean).map(n=>
  n==='|'?'<tool-sep></tool-sep>':n==='>>'?'<tool-more></tool-more>':n==='_>>'?'<tool-more spaced></tool-more>':
  `<tool-button icon="${n.replace(/[+*]/,'')}"${n.endsWith('+')?' menu':''}${n.endsWith('*')?' checked':''}></tool-button>`).join('')}</tool-bar>`).join('')}</tool-row>`;

define('tool-area',`:host{display:block;padding:1px 0 2px;flex:none;background:#f0f0f0}`,()=>
 row('doc open save layout layouts style','pan* panSel zin zout zfull zsel zlayer z11 zlast znext newmap new3d bmnew bm clock refresh','info abacus gear sigma table+ measure+ balloon gearoff+')+
 row('datasrc geopkg newshp feather memory mesh | virtual |','pencils pencil saveoff addpts vertex+ multiedit trash cut copy paste undo redo','lab diagram | labpin labred | labpoff labeye labmove _>>','globeb','python >>','help','')+
 row('setsq curve+ movef+ rotate scale simplify ring part fillring delring delpart reshape offset vdel merge split1 split2 join align mirror+')+
 row('select+ selform+ deselect+ selloc','fieldcalc fieldsel+ expr topo+','annot+ annsel annpoly annline annstar anntext | annbox+','wkt ewkt json'));

define('layer-panel',`
 :host{display:flex;flex-direction:column;flex:0 0 360px;padding:0 7px 0 1px;background:#ececec}
 header{display:flex;align-items:center;gap:2px;height:18px;padding:0 1px 0 3px;color:#333}
 h2{flex:1;margin:0;font-size:11px;line-height:16px;font-weight:500}
 header button{all:unset;box-sizing:border-box;width:11px;height:11px;border:1px solid #777;border-radius:3px;display:flex;align-items:center;justify-content:center}
 nav{display:flex;align-items:flex-start;height:29px;padding:1px 0 0 1px}
 .tree{flex:1;background:#fff}
 .layer{display:flex;align-items:center;height:17px;padding-left:22px;background:#0d63de;color:#fff}
 input{appearance:none;flex:none;width:13px;height:13px;margin:0;background:#fff;display:flex;justify-content:center}
 input:checked::before{content:"";width:3px;height:7px;margin-top:1px;border:solid #111;border-width:0 2px 2px 0;transform:rotate(40deg)}
 .dot{width:2px;height:2px;margin:0 12px;background:#b5a785;border-radius:1px}
 label{display:flex;align-items:center;font-weight:700;line-height:16px;text-decoration:underline;text-underline-offset:2px}`,
 `<header><h2>Capas</h2>
 <button type="button" aria-label="Desacoplar"><svg width="7" height="7" viewBox="0 0 7 7" fill="none" stroke="#444"><path d="M2.500.5h4v4h-4zM.5 2.500h4v4h-4z"/></svg></button>
 <button type="button" aria-label="Cerrar"><svg width="7" height="7" viewBox="0 0 7 7" stroke="#333" stroke-width="1.500"><path d="M1 1l5 5M6 1L1 6"/></svg></button></header>
 <nav>${['brush','addgroup','eye','filter','eps+','expand','collapse','remove'].map(n=>`<tool-button small icon="${n.replace('+','')}"${n.endsWith('+')?' menu':''}></tool-button>`).join('')}</nav>
 <div class="tree"><div class="layer"><input type="checkbox" id="l" checked><span class="dot"></span><label for="l">PuntoMuestreoCTM12</label></div></div>`);

/* Sample points: each sheet has an origin, all coordinates in thirds of a pixel. */
const SHEETS=[
 [1080,0,'100,37 88,55 90,54 166,81 166,88 167,94 172,99 184,105 200,95 208,93 215,92 219,92 206,107 207,119 211,120 232,110 239,105 307,80 330,83 333,92 335,100 285,116 290,122 272,131 268,140 275,140 321,110 326,116 327,124 328,130 327,136 311,135 306,141 308,148 304,144 352,127 357,133 356,140 357,146 365,138 369,150 372,136 379,129 393,129 365,156 369,169 364,174 362,180 330,166 390,162 402,152 390,175 391,168 432,156 452,149 472,174 494,201 525,163 517,170 519,187 544,192 556,207 540,217 226,157 234,173 246,183 257,202 274,200 301,201 305,204 303,211 297,219 308,237 337,256 449,244 435,271 522,277 536,283 634,261 599,266 611,267 600,275 595,287 611,285 613,282 568,317 563,342 487,335 558,416 550,427 560,426 563,435 549,443 531,440 618,508 660,510 545,526 545,543 393,531 408,532 414,535 467,532 494,534 427,563 449,570 497,566 206,555'],
 [1110,609,'66,62 132,107 157,133 192,217 278,102 282,102 268,96 293,97 293,132'],
 [555,249,'217,45 220,54 197,75 232,70 234,79 213,99 270,86 260,95 261,100 257,108 252,124 110,105 114,115 121,124 75,203 90,229 38,279 347,153 348,157 345,171 353,172 361,177 320,188 365,219 421,260 406,290 411,293 423,297 432,307 505,351 527,362 343,439'],
 [555,834,'115,44 134,79 129,122 109,231 109,243 318,242 507,51 443,63 456,64 447,71 425,85 407,88 487,100 452,107 521,118 400,115 403,117 404,140 424,157 473,175 460,187 476,197 536,200 494,208 509,210 503,224 519,223 551,229 564,225 515,239 502,240 493,243 474,248 484,253 458,257 542,254 516,262 522,262 529,262 531,272 568,271 598,270 567,297 561,319 568,319 584,364 559,398 492,436 179,383 196,393 255,389 254,399 276,415 287,413 297,413 303,424 307,426 338,429 102,423 115,414 128,418 107,432 146,425 134,430 138,437 137,445 145,448 151,446 162,440 172,444 192,434 209,428 219,453 112,455 140,455 130,452 122,424 28,84']
];
define('map-canvas',`:host{display:block;flex:1;min-width:0;background:#fff;overflow:hidden}svg{width:100%;height:100%}`,
 ()=>`<svg role="img" aria-label="Mapa de puntos de muestreo"><g transform="scale(.3333)" fill="#bfb08f" stroke="#35352f" stroke-opacity=".8" stroke-width="3.500">${SHEETS.map(([ox,oy,p])=>p.split(' ').map(q=>{const[a,b]=q.split(',').map(Number);return`<circle cx="${ox+a+1}" cy="${oy+b+1}" r="8"/>`}).join('')).join('')}</g></svg>`);

define('menu-item',`
 :host{display:flex;position:relative;flex:1 1 0}
 button{all:unset;box-sizing:border-box;display:flex;align-items:center;gap:4px;width:100%;padding:0 4px 0 5px;color:#2a2a2a;white-space:nowrap;font-size:12px;line-height:16px}
 span{flex:1}
 .pic{width:16px;height:16px;flex:none}
 ::slotted(u){text-decoration-thickness:1px;text-underline-offset:2px}
 :host([disabled]) button{color:#bdbdbd}
 :host([disabled]) .pic{opacity:.4}
 :host([active]) button{background:#7da3ec;color:#fff}
 .sub{flex:none;width:0;height:0;border:3px solid transparent;border-left:5px solid #555;border-right:0}
 :host([active]) .sub{border-left-color:#e4ecfb}`,
 e=>`<button type="button" role="menuitem"><div class="pic">${e.at('icon')?icon(e.at('icon'),16):''}</div><span><slot></slot></span>${e.hasAttribute('sub')?'<div class="sub"></div>':''}</button><slot name="submenu"></slot>`);

define('menu-sep',`:host{flex:0 0 2px;margin:0 4px;background:linear-gradient(#dcdcdc 1px,transparent 1px)}`,``);

define('context-menu',`
 :host{position:absolute;display:flex;flex-direction:column;background:#fff;border:1px solid #a6a6a6;box-shadow:0 4px 14px rgba(0,0,0,.32);z-index:2}`,
 `<slot></slot>`);

define('status-bar',`
 :host{display:flex;align-items:center;flex:none;height:27px;padding:2px 4px 0;background:#e9e9e9;border-top:1px solid #c4c4c4;font-size:11px}
 .f{flex:none;height:20px;border:1px solid #b4b4b4;border-radius:2px;background:#fff;font:inherit;color:#333;padding:0 4px;margin:0}
 .search{display:flex;align-items:center;gap:7px;width:270px;padding:0 7px;font-size:12px}
 .search input{all:unset;flex:1;line-height:16px}
 .search input::placeholder{color:#777;opacity:1}
 .spin{display:flex;align-items:stretch;padding:0}
 .spin input{all:unset;flex:1;min-width:0;padding-left:5px}
 .spin i{width:12px;border-left:1px solid #b4b4b4;background:#f3f3f3;display:flex;align-items:center;justify-content:center}
 .spin i::before{content:"";border:3px solid transparent;border-top:4px solid #444;border-bottom:0;margin-top:6px}
 .t{display:flex;justify-content:center;overflow:hidden;white-space:nowrap;line-height:16px;flex:none}
 .grow{flex:1}
 .c{display:flex;align-items:center;gap:4px;white-space:nowrap;padding-left:5px}
 .c input{appearance:none;width:12px;height:12px;margin:0;border:1px solid #b4b4b4;background:#fff}
 .s34{width:34px}.s36{width:36px}.s38{width:38px}.s42{width:42px}.s63{width:63px}.w86{width:86px}.w88{width:88px}.w111{width:111px}
 button{all:unset;display:flex;align-items:center;gap:2px;white-space:nowrap}
 .crs{margin-right:21px}`,
 `<div class="f search">${icon('search',12)}<input type="text" aria-label="Localizar" placeholder="Escriba para localizar (⌘K)"></div>
 <div class="s63"></div><input class="f w111" aria-label="Coordenada">
 <div class="t s42">${icon('wheel',14)}</div>
 <div class="f spin w86"><input aria-label="Escala"><i></i></div>
 <div class="t s34">${icon('lock',11)}</div>
 <label class="t s38" for="am">Amplificador</label><div class="f spin w86"><input id="am" value="100%"><i></i></div>
 <label class="t s36" for="ro">Rotación</label><div class="f spin w88"><input id="ro" value="0,0 °"><i></i></div>
 <label class="c"><input type="checkbox" checked>Representar</label>
 <div class="grow"></div>
 <button type="button" class="crs">${icon('globe',14)}<span>USER:100001</span></button>
 <button type="button" aria-label="Mensajes">${icon('chat',16)}</button>`);

define('gis-window',`
 :host{display:flex;flex-direction:column;height:100vh;position:relative}
 main{display:flex;flex:1;min-height:0}
 .m1{left:221px;top:208px;width:333px;height:461px}
 .m2{left:332px;top:0;width:344px;height:91px}`,
 `<tool-area></tool-area>
 <main><layer-panel></layer-panel><map-canvas></map-canvas></main>
 <status-bar></status-bar>
 <context-menu class="m1" role="menu">
 <menu-item icon="zlayer"><u>Z</u>oom to Layer(s)</menu-item>
 <menu-item icon="zlayer" disabled>Zoom a la <u>s</u>elección</menu-item>
 <menu-item icon="glasses">Show in <u>O</u>verview</menu-item>
 <menu-item icon="box">Show Feature <u>C</u>ount</menu-item>
 <menu-item icon="labsmall">Mostrar <u>E</u>tiquetas</menu-item>
 <menu-item>Copiar capa</menu-item>
 <menu-item>Cambiar <u>n</u>ombre de la capa</menu-item>
 <menu-item icon="db">Actualizar capa SQL…</menu-item>
 <menu-sep></menu-sep>
 <menu-item icon="dup"><u>D</u>uplicar capa</menu-item>
 <menu-item icon="remove"><u>E</u>liminar capa…</menu-item>
 <menu-sep></menu-sep>
 <menu-item icon="table">Abrir tabla de <u>a</u>tributos</menu-item>
 <menu-item icon="pencil">Conmutar <u>e</u>dición</menu-item>
 <menu-item><u>F</u>iltrar…</menu-item>
 <menu-item>Cambiar fuente de datos…</menu-item>
 <menu-sep></menu-sep>
 <menu-item>Establecer <u>v</u>isibilidad de escala de capas…</menu-item>
 <menu-item sub>SRC de la capa</menu-item>
 <menu-sep></menu-sep>
 <menu-item sub active>E<u>x</u>portar<context-menu class="m2" slot="submenu" role="menu">
  <menu-item active>Gu<u>a</u>rdar objetos como…</menu-item>
  <menu-item disabled>Guardar objetos <u>s</u>eleccionados como…</menu-item>
  <menu-item>Guardar como Archivo de <u>D</u>efinición de Capa…</menu-item>
  <menu-item>Guardar como archivo de estilo de capa de <u>Q</u>GIS…</menu-item>
 </context-menu></menu-item>
 <menu-sep></menu-sep>
 <menu-item sub>Estilos</menu-item>
 <menu-item>Añadir notas de la capa…</menu-item>
 <menu-item><u>P</u>ropiedades…</menu-item>
 </context-menu>`);
</script>
</body>
</html>
